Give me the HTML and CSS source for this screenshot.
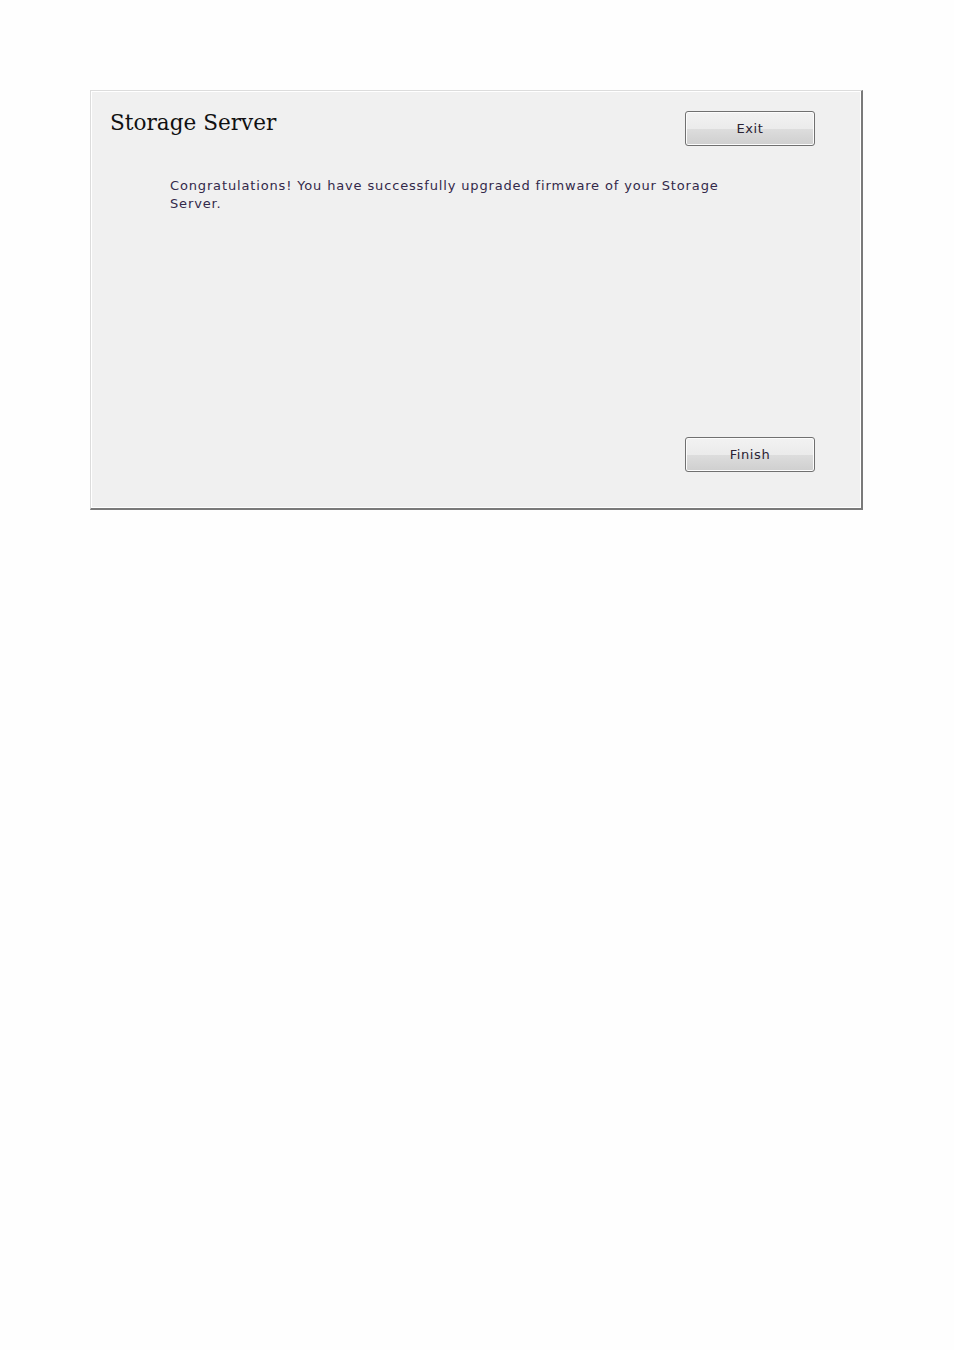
FILE: index.html
```html
<!DOCTYPE html>
<html lang="en">
<head>
<meta charset="utf-8">
<title>Storage Server</title>
<link rel="stylesheet" href="styles.css">
</head>
<body>
<div class="panel">
  <div class="header">
    <h1 class="title">Storage Server</h1>
    <button class="btn" type="button">Exit</button>
  </div>
  <p class="message">Congratulations! You have successfully upgraded firmware of your Storage Server.</p>
  <div class="spacer"></div>
  <div class="footer">
    <button class="btn" type="button">Finish</button>
  </div>
</div>
</body>
</html>
```
FILE: styles.css
```css
html, body {
  margin: 0;
  padding: 0;
  background: #fefefe;
}
body {
  padding: 90px 0 0 90px;
}
.panel {
  box-sizing: border-box;
  width: 773px;
  height: 420px;
  background: #f0f0f0;
  border-top: 1px solid #dcdcdc;
  border-left: 1px solid #dcdcdc;
  border-right: 2px solid #7a7a7a;
  border-bottom: 2px solid #7a7a7a;
  box-shadow: inset -1px -1px 0 #ffffff, inset 1px 1px 0 #ffffff;
  padding: 20px 46px 36px 19px;
  display: flex;
  flex-direction: column;
}
.header {
  display: flex;
  justify-content: space-between;
  align-items: flex-start;
  height: 34px;
}
.title {
  margin: -2px 0 0 0;
  font-family: "DejaVu Serif", serif;
  font-weight: normal;
  font-size: 21.6px;
  line-height: 28px;
  color: #111;
}
.message {
  margin: 32px 0 0 60px;
  width: 570px;
  font-family: "DejaVu Sans", Verdana, sans-serif;
  font-size: 13px;
  letter-spacing: 0.85px;
  line-height: 18px;
  color: #33294a;
}
.spacer {
  flex: 1;
}
.footer {
  display: flex;
  justify-content: flex-end;
}
.btn {
  box-sizing: border-box;
  width: 130px;
  height: 35px;
  border: 1px solid #707070;
  border-radius: 3px;
  background: linear-gradient(to bottom, #f2f2f2 0%, #ebebeb 50%, #dddddd 51%, #cfcfcf 100%);
  box-shadow: inset 0 0 0 1px #fcfcfc;
  font-family: "DejaVu Sans", Verdana, sans-serif;
  font-size: 13px;
  letter-spacing: 0.6px;
  color: #2a2233;
  padding: 0;
  margin: 0;
}
```
